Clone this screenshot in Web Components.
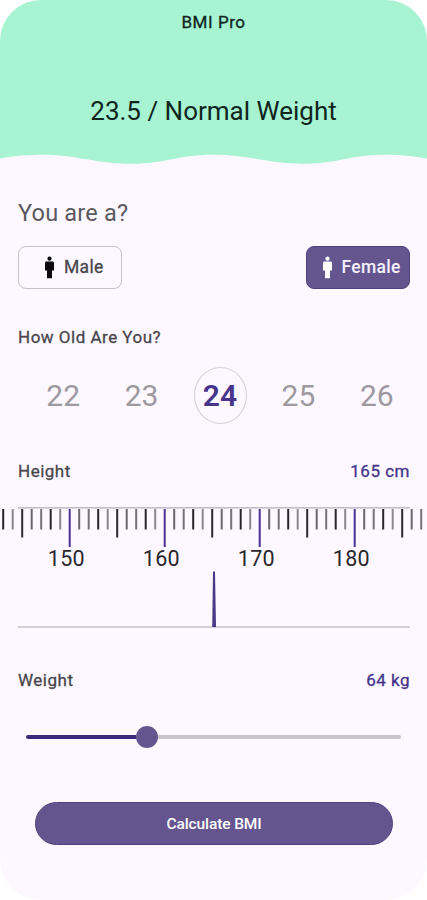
<!DOCTYPE html>
<html lang="en">
<head>
<meta charset="utf-8">
<title>BMI Pro</title>
<style>
  body {
    margin: 0;
    background: #fff;
    font-family: Roboto, "Liberation Sans", sans-serif;
  }
</style>
</head>
<body>
<bmi-screen>
  <bmi-header slot="header" data-title="BMI Pro">23.5 / Normal Weight</bmi-header>
  <gender-picker>
    <span slot="title">You are a?</span>
    <gender-option>Male</gender-option>
    <gender-option selected>Female</gender-option>
  </gender-picker>
  <age-picker data-from="22" data-to="26" data-value="24">How Old Are You?</age-picker>
  <field-label class="height">Height<span slot="value">165 cm</span></field-label>
  <height-ruler data-from="143" data-to="187"></height-ruler>
  <field-label>Weight<span slot="value">64 kg</span></field-label>
  <weight-slider></weight-slider>
  <primary-button>Calculate BMI</primary-button>
</bmi-screen>

<script>
class BmiScreen extends HTMLElement {
  constructor() {
    super();
    const shadow = this.attachShadow({ mode: 'open' });
    shadow.innerHTML = `
      <style>
        :host {
          display: flex;
          flex-direction: column;
          box-sizing: border-box;
          width: 427px;
          height: 900px;
          overflow: hidden;
          border-radius: 41px;
          background-color: #fdf8ff;
          --purple: #65558f;
          --dark-purple: #3c2a7d;
          --text: #49464c;
          --line: #c9c5cb;
        }
        main {
          display: flex;
          flex-direction: column;
          padding: 33px 17px 0 18px;
        }
      </style>
      <slot name="header"></slot>
      <main><slot></slot></main>
    `;
  }
}

class BmiHeader extends HTMLElement {
  constructor() {
    super();
    const shadow = this.attachShadow({ mode: 'open' });
    shadow.innerHTML = `
      <style>
        :host {
          display: flex;
          flex-direction: column;
          flex: none;
          height: 165px;
          text-align: center;
          color: #10251c;
        }
        .bar {
          height: 154px;
          background-color: #a7f3d2;
        }
        .title {
          padding-top: 12px;
          font-size: 17px;
          line-height: 20px;
          letter-spacing: 0.55px;
          -webkit-text-stroke: 0.3px;
        }
        .result {
          padding-top: 63px;
          font-size: 26px;
          line-height: 32px;
        }
        svg {
          display: block;
        }
      </style>
      <div class="bar">
        <div class="title"></div>
        <div class="result"><slot></slot></div>
      </div>
      <svg width="427" height="11" viewBox="0 0 427 11">
        <path fill="#a7f3d2" d="M0 0V4.5C15 1.5 28 .7 43 .7C77 .7 96 9.7 131 9.7C166 9.7 178 .7 213 .7C249 .7 268 9.7 303 9.7C337 9.7 350 .7 385 .7C402 .7 414 2 427 4.5V0Z"/>
      </svg>
    `;
  }

  connectedCallback() {
    this.shadowRoot.querySelector('.title').textContent = this.dataset.title;
  }
}

class GenderPicker extends HTMLElement {
  constructor() {
    super();
    const shadow = this.attachShadow({ mode: 'open' });
    shadow.innerHTML = `
      <style>
        :host {
          display: block;
        }
        .title {
          font-size: 23.5px;
          line-height: 30px;
          letter-spacing: 0.2px;
          color: #5b585e;
        }
        .options {
          display: flex;
          justify-content: space-between;
          margin-top: 17.5px;
        }
      </style>
      <div class="title"><slot name="title"></slot></div>
      <div class="options"><slot></slot></div>
    `;
  }
}

class GenderOption extends HTMLElement {
  constructor() {
    super();
    const shadow = this.attachShadow({ mode: 'open' });
    shadow.innerHTML = `
      <style>
        :host {
          display: flex;
          align-items: center;
          box-sizing: border-box;
          width: 104px;
          height: 43px;
          padding-left: 25px;
          border: 1px solid #c5c1c8;
          border-radius: 8px;
          color: var(--text);
          font-size: 17.5px;
          letter-spacing: 0.3px;
          white-space: nowrap;
          -webkit-text-stroke: 0.3px;
        }
        :host([selected]) {
          padding-left: 15px;
          border-color: #51417f;
          background-color: var(--purple);
          color: #f6f0ff;
          font-weight: 500;
          -webkit-text-stroke: 0;
        }
        svg {
          flex: none;
          margin-right: 9px;
          fill: #0b0a0c;
        }
        :host([selected]) svg {
          margin-right: 8.5px;
          fill: #fff;
        }
      </style>
      <svg width="11" height="23" viewBox="0 0 11 23">
        <circle cx="5.5" cy="2.7" r="2.1"/>
        <path d="M2.4 5.5H8.6Q10 5.5 10 6.9V14.5H8V22.2H3V14.5H1V6.9Q1 5.5 2.4 5.5Z"/>
      </svg>
      <slot></slot>
    `;
  }
}

class AgePicker extends HTMLElement {
  constructor() {
    super();
    const shadow = this.attachShadow({ mode: 'open' });
    shadow.innerHTML = `
      <style>
        :host {
          display: block;
          margin-top: 37.5px;
        }
        .title {
          font-size: 17px;
          line-height: 22px;
          letter-spacing: 0.5px;
          color: var(--text);
          -webkit-text-stroke: 0.3px;
        }
        .ages {
          display: grid;
          grid-template-columns: repeat(5, 78.4px);
          justify-content: center;
          justify-items: center;
          margin: 19px 0 0 12px;
        }
        .age {
          box-sizing: border-box;
          width: 53px;
          height: 57px;
          border: 1px solid transparent;
          border-radius: 50%;
          line-height: 55px;
          text-align: center;
          font-size: 30px;
          color: #9c999f;
        }
        .age.current {
          border-color: #d3cfd6;
          font-weight: 600;
          color: #46358a;
        }
      </style>
      <div class="title"><slot></slot></div>
      <div class="ages"></div>
    `;
  }

  connectedCallback() {
    const ages = this.shadowRoot.querySelector('.ages');
    for (let age = Number(this.dataset.from); age <= Number(this.dataset.to); age++) {
      const item = document.createElement('div');
      item.className = age === Number(this.dataset.value) ? 'age current' : 'age';
      item.textContent = age;
      ages.appendChild(item);
    }
  }
}

class FieldLabel extends HTMLElement {
  constructor() {
    super();
    const shadow = this.attachShadow({ mode: 'open' });
    shadow.innerHTML = `
      <style>
        :host {
          display: flex;
          justify-content: space-between;
          margin-top: 41px;
          font-size: 17px;
          line-height: 22px;
          letter-spacing: 0.5px;
          color: var(--text);
          -webkit-text-stroke: 0.3px;
        }
        :host(.height) {
          margin-top: 36px;
        }
        .value {
          color: #46358a;
        }
      </style>
      <span><slot></slot></span>
      <span class="value"><slot name="value"></slot></span>
    `;
  }
}

class HeightRuler extends HTMLElement {
  constructor() {
    super();
    const shadow = this.attachShadow({ mode: 'open' });
    shadow.innerHTML = `
      <style>
        :host {
          display: block;
          height: 122px;
          margin: 24px -17px 0 -18px;
        }
        svg {
          display: block;
        }
        text {
          font-size: 21.5px;
          letter-spacing: 0.3px;
          text-anchor: middle;
          fill: #29272b;
        }
      </style>
      <svg width="427" height="122" viewBox="0 506 427 122">
        <rect x="18" y="507" width="392" height="1.5" fill="#bfbcc1"/>
        <g class="ticks"></g>
        <rect x="18" y="626.2" width="392" height="1.6" fill="#c9c6cb"/>
        <path fill="#4b3889" d="M213 571.5H215L216 627H212.2Z"/>
      </svg>
    `;
  }

  connectedCallback() {
    const from = Number(this.dataset.from);
    const to = Number(this.dataset.to);
    const shades = ['#28262a', '#8a888c', '#5b595d', '#6a686c', '#747276'];
    let marks = '';
    for (let cm = from; cm <= to; cm++) {
      const x = 69.7 + (cm - 150) * 9.5;
      let height = 20.5;
      let color = shades[(cm - from) % 5];
      if (cm % 10 === 0) {
        height = 38;
        color = '#4a3093';
        marks += `<text x="${x - 3.3}" y="566.3">${cm}</text>`;
      } else if (cm % 5 === 0) {
        height = 28.5;
        color = '#2b292d';
      }
      marks += `<rect x="${x - 1}" y="509" width="2" height="${height}" fill="${color}"/>`;
    }
    this.shadowRoot.querySelector('.ticks').innerHTML = marks;
  }
}

class WeightSlider extends HTMLElement {
  constructor() {
    super();
    const shadow = this.attachShadow({ mode: 'open' });
    shadow.innerHTML = `
      <style>
        :host {
          display: flex;
          align-items: center;
          height: 22px;
          margin: 35px 9px 0 8px;
        }
        .filled {
          width: 110px;
          height: 4px;
          border-radius: 2px 0 0 2px;
          background-color: var(--dark-purple);
        }
        .thumb {
          width: 22px;
          height: 22px;
          border-radius: 50%;
          background-color: var(--purple);
        }
        .rest {
          flex: 1;
          height: 4px;
          border-radius: 0 2px 2px 0;
          background-color: var(--line);
        }
      </style>
      <div class="filled"></div>
      <div class="thumb"></div>
      <div class="rest"></div>
    `;
  }
}

class PrimaryButton extends HTMLElement {
  constructor() {
    super();
    const shadow = this.attachShadow({ mode: 'open' });
    shadow.innerHTML = `
      <style>
        :host {
          display: flex;
          align-items: center;
          justify-content: center;
          box-sizing: border-box;
          height: 43px;
          margin: 54px 17px 0;
          border: 1px solid #51417f;
          border-radius: 22px;
          background-color: var(--purple);
          color: #fff;
          font-size: 15.5px;
          font-weight: 500;
          letter-spacing: -0.1px;
        }
      </style>
      <slot></slot>
    `;
  }
}

customElements.define('bmi-screen', BmiScreen);
customElements.define('bmi-header', BmiHeader);
customElements.define('gender-picker', GenderPicker);
customElements.define('gender-option', GenderOption);
customElements.define('age-picker', AgePicker);
customElements.define('field-label', FieldLabel);
customElements.define('height-ruler', HeightRuler);
customElements.define('weight-slider', WeightSlider);
customElements.define('primary-button', PrimaryButton);
</script>
</body>
</html>
